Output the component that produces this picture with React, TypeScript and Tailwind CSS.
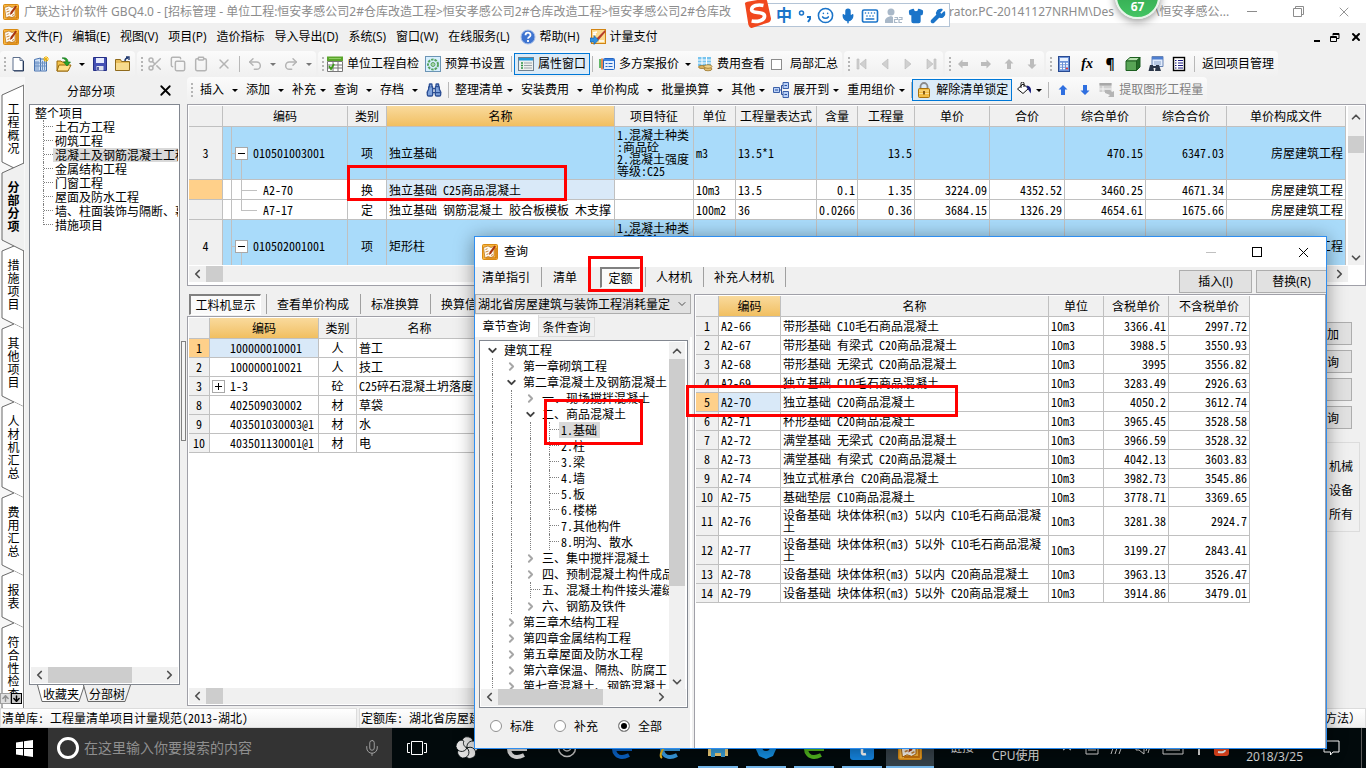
import type { ReactNode } from "react";
import {
  ArrowDown,
  ArrowUp,
  Binoculars,
  ChevronDown,
  ChevronLeft,
  ChevronRight,
  ChevronUp,
  Clipboard,
  Copy,
  Keyboard,
  Mic,
  Redo2,
  Scissors,
  Shirt,
  Smile,
  Undo2,
  Wrench,
  X,
} from "lucide-react";

/* ---------- icons ---------- */

function Svg({ children, className = "size-4" }: { children: ReactNode; className?: string }) {
  return (
    <svg viewBox="0 0 16 16" className={`shrink-0 ${className}`} fill="none" aria-hidden="true">
      {children}
    </svg>
  );
}

function AppIcon({ className = "size-4" }: { className?: string }) {
  return (
    <Svg className={className}>
      <rect x=".5" y=".5" width="15" height="15" rx="1" fill="#f9b53c" stroke="#d98a12" />
      <path d="M1.500 3.500l4.500-1.500 3 1.500 3-1v9.500l-3 1.500-3-1-3 1.500z" fill="#fffaf0" stroke="#a35c0a" strokeWidth=".6" />
      <path d="M3.500 5.500l2-.8M3.500 8l3-1M4.500 10.500l2-.8M9 11.500l2-1" stroke="#c8863a" />
      <path d="M12.500 1.500L7.500 8l-.6 3 2.300-1.500L14 2.500z" fill="#a8340f" />
      <path d="M14 4v10H4" stroke="#c8720a" strokeWidth="1.200" />
    </Svg>
  );
}

const NewIcon = () => (
  <Svg>
    <path d="M3 1.500h7l3 3v10H3z" fill="#fff" stroke="#5d6f8c" />
    <path d="M10 1.500v3h3" stroke="#5d6f8c" />
    <path d="M13.500 5v10H4" stroke="#26395a" />
  </Svg>
);

const BuildingIcon = () => (
  <Svg>
    <path d="M1.500 3.500l6-1.500v13h-6zM7.500 3h6v12h-6z" fill="#cfe0f5" stroke="#4a74b0" />
    <path d="M3 5v9M5 5v9M9.500 5v9M11.500 5v9M2 7h11M2 10h11" stroke="#6f93c6" />
    <path d="M13 0v6M10 3h6M11 1l4 4M15 1l-4 4" stroke="#f3b300" />
  </Svg>
);

const OpenIcon = () => (
  <Svg>
    <path d="M1 5h4l1 1h6v9H1z" fill="#f2c14a" stroke="#9a6b0c" />
    <path d="M3 9h12l-3 6H1z" fill="#ffe08a" stroke="#9a6b0c" />
    <path d="M6 2c4-1 6 1 6 4h2.500L11 10 7.500 6H10c0-2-1-3-4-4z" fill="#27a52c" stroke="#0f6c16" strokeWidth=".6" />
  </Svg>
);

const SaveIcon = () => (
  <Svg>
    <path d="M1.500 1.500h13v13h-13z" fill="#4450b4" stroke="#252f86" />
    <path d="M4 2h8v5H4z" fill="#e8ecff" />
    <path d="M4.500 10h7v4.500h-7z" fill="#dfe3ee" />
    <path d="M6 11v3" stroke="#252f86" strokeWidth="1.500" />
  </Svg>
);

const FolderIcon = () => (
  <Svg>
    <path d="M.5 3.500h5l1 2h8v9H.5z" fill="#e8bd5b" stroke="#8f6a1c" />
    <path d="M1 7h13v7H1z" fill="#f7db8e" />
    <path d="M10 5c0-2 1-3 3-3M11 1l3 0v3" stroke="#20386e" strokeWidth="1.400" />
  </Svg>
);

const CheckSheetIcon = () => (
  <Svg>
    <path d="M.5 5.500h15v10H.5z" fill="#fff" stroke="#777" />
    <path d="M0 .5h16v4.500H0z" fill="#5aa52b" />
    <path d="M2 2.500h12" stroke="#8fce63" />
    <path d="M6 5v10M1 9h14M1 12h14M11 5v10" stroke="#777" />
    <path d="M2 10l2 3 3-5" stroke="#3c9b19" strokeWidth="1.800" />
  </Svg>
);

const GearPageIcon = () => (
  <Svg>
    <rect x=".5" y=".5" width="15" height="15" fill="#d8efff" stroke="#6b95b5" />
    <circle cx="8" cy="8.500" r="5" stroke="#58a45e" strokeWidth="2" strokeDasharray="2.500 1" />
    <circle cx="8" cy="8.500" r="2" fill="#a9d6ad" stroke="#58a45e" />
  </Svg>
);

const PanelIcon = () => (
  <Svg>
    <rect x=".5" y="1.500" width="15" height="13" fill="#eef0ee" stroke="#6f8190" />
    <path d="M1 2h14v2.500H1z" fill="#1c9ae0" />
    <path d="M3 7h2M3 9.500h2M3 12h2" stroke="#2f9146" strokeWidth="1.500" />
    <path d="M6 7h8M6 9.500h8M6 12h8" stroke="#9aa3a8" />
  </Svg>
);

const PlansIcon = () => (
  <Svg>
    <path d="M1 3v9" stroke="#35a33b" strokeWidth="1.500" />
    <path d="M3 2.500v11" stroke="#e0651b" strokeWidth="1.500" />
    <rect x="4.500" y="2.500" width="11" height="11" rx="1" fill="#e6f0ff" stroke="#2466c4" />
    <path d="M5 3h10v2H5z" fill="#3b82e0" />
    <path d="M6.500 7.500h2M6.500 10.500h2M9.500 7.500h4M9.500 10.500h4" stroke="#2466c4" />
  </Svg>
);

const FeeIcon = () => (
  <Svg>
    <path d="M1 1h13v9H1z" fill="#78c4ee" />
    <path d="M1 4h13M1 7h13M5 1v9M9.500 1v9" stroke="#fff" />
    <ellipse cx="5" cy="11" rx="3.500" ry="1.600" fill="#dcb15c" stroke="#8f6a1c" strokeWidth=".7" />
    <ellipse cx="11" cy="13" rx="4" ry="1.800" fill="#e6c173" stroke="#8f6a1c" strokeWidth=".7" />
    <ellipse cx="11" cy="10.500" rx="4" ry="1.800" fill="#f0d28b" stroke="#8f6a1c" strokeWidth=".7" />
  </Svg>
);

const CalcIcon = () => (
  <Svg>
    <rect x="2.500" y=".5" width="11" height="15" fill="#6e93d8" stroke="#284a92" />
    <path d="M4 2h8v3H4z" fill="#e9f2ff" />
    <path d="M4 7.500h8M4 10h8M4 12.500h8" stroke="#fff" strokeWidth="1.500" strokeDasharray="2 1" />
    <path d="M10 12.500h2" stroke="#e33" strokeWidth="1.500" />
  </Svg>
);

const CubeIcon = () => (
  <Svg>
    <path d="M1 5l4-3.500h10L11.500 5z" fill="#b6e0ae" stroke="#1d5f20" />
    <path d="M1 5h10.500v9.500H1z" fill="#58a556" stroke="#1d5f20" />
    <path d="M11.500 5L15 1.500V11l-3.500 3.500z" fill="#256d2a" stroke="#1d5f20" />
  </Svg>
);

const FindSheetIcon = () => (
  <Svg>
    <path d="M4 .5h11v10H4z" fill="#e2ecfb" stroke="#6884b4" />
    <path d="M4 1h11v2.500H4z" fill="#4f7fd0" />
    <path d="M6 6h7M6 8h7" stroke="#8aa2c8" />
    <path d="M2 9h3l1 6H.5zM8 9h3l2 6H7z" fill="#2b3648" />
    <path d="M5 10h3v2H5z" fill="#2b3648" />
  </Svg>
);

const ListIcon = () => (
  <Svg>
    <rect x="2.500" y="1.500" width="11" height="13" fill="#fff" stroke="#000" strokeWidth="1.400" />
    <path d="M4 4.500h1.500M4 7h1.500M4 9.500h1.500M4 12h1.500M7 4.500h5M7 7h5M7 9.500h5M7 12h5" stroke="#1b1b80" />
  </Svg>
);

const ExpandIcon = () => (
  <Svg>
    <path d="M.5 5.500h6v5h-6zM10 .5h5.500v6H10zM10 9.500h5.500v6H10z" fill="#b9d0f7" stroke="#3c61a8" />
    <path d="M6.500 8h2M8.500 3.500v9M8.500 3.500H10M8.500 12.500H10M2 8h3M11.500 3.500h2.500M11.500 12.500h2.500" stroke="#2b4f9c" />
  </Svg>
);

const LockIcon = () => (
  <Svg>
    <path d="M4.500 7V4.500a3.500 3.500 0 017 0V7" stroke="#8b8b8b" strokeWidth="1.800" />
    <rect x="2.500" y="6.500" width="11" height="9" rx="1" fill="#f2bd45" stroke="#a8720d" />
    <path d="M3 9h10M3 11.500h10" stroke="#fbe09a" />
    <path d="M8 9v3.500" stroke="#6a4100" strokeWidth="1.600" />
  </Svg>
);

const BucketIcon = () => (
  <Svg>
    <path d="M1.500 7l5.500-5 5.500 4.500-5.500 5z" fill="#fff" stroke="#111" />
    <path d="M8 5V1.500a1.500 1.500 0 00-3 0V6" stroke="#111" />
    <path d="M10.500 3.500c4 0 5.500 4 4 8-1-2.500-2-3.500-3-4.500z" fill="#1a1f7c" />
  </Svg>
);

const ExtractIcon = () => (
  <Svg>
    <path d="M.5 1h12v9H.5z" fill="#d0d0d0" />
    <path d="M.5 1h12v2.500H.5z" fill="#a8a8a8" />
    <path d="M4 4v9M.5 7h12" stroke="#f4f4f4" />
    <path d="M6 8h5l2 2 2-1v6H9l2-2-5-2z" fill="#b4b4b4" />
  </Svg>
);

const HelpIcon = () => (
  <Svg>
    <circle cx="8" cy="8" r="7" fill="#3e74d0" stroke="#a9bfe8" />
    <path d="M5.500 6.200a2.500 2.500 0 115 0c0 1.800-2.500 1.800-2.500 3.600M8 11v2" stroke="#fff" strokeWidth="1.800" />
  </Svg>
);

const PayIcon = () => (
  <Svg>
    <rect x="1.500" y=".5" width="14" height="14" fill="#fbd98c" stroke="#d28413" />
    <path d="M3 4l4-1M3 6l3-1M9 12h5" stroke="#fff" strokeWidth="1.500" />
    <path d="M15 1L7 9l-1 3 3-1.500L15.500 3z" fill="#b43d2a" />
    <path d="M0 9h4V6.500L8.500 11 4 15.500V13H0z" fill="#2f8fe0" stroke="#175c9c" strokeWidth=".6" />
  </Svg>
);

const MdiRestore = () => (
  <svg width="10" height="9" fill="none" stroke="#000" aria-hidden="true">
    <path d="M3 2.500V.5h6v5H7M3 1.500h6M.5 3.500h6v5h-6zM.5 4.500h6" />
  </svg>
);

function BlockArrow({ dir, color }: { dir: "left" | "right" | "up" | "down"; color: string }) {
  const turn = { up: 0, right: 90, down: 180, left: 270 }[dir];
  return (
    <Svg>
      <path d="M8 3l4.500 4.500h-2.500V13H6V7.500H3.500z" fill={color} transform={`rotate(${turn} 8 8)`} />
    </Svg>
  );
}

/* ---------- small parts ---------- */

const Grip = () => (
  <svg width="3" height="16" className="-mr-1 shrink-0" aria-hidden="true">
    {[1, 5, 9, 13].map((y) => (
      <rect key={y} x="0" y={y} width="2" height="2" fill="#b5b5b5" />
    ))}
  </svg>
);

const Sep = () => <span className="h-4 w-px shrink-0 bg-[#b8b8b8]" />;

const Caret = ({ dim = false }: { dim?: boolean }) => (
  <svg width="6" height="3" viewBox="0 0 6 3" className="shrink-0" aria-hidden="true">
    <path d="M0 0h6L3 3z" fill={dim ? "#777" : "#000"} />
  </svg>
);

function Group({ children, className = "gap-[7px]" }: { children: ReactNode; className?: string }) {
  return (
    <div className={`flex h-[26px] shrink-0 items-center rounded bg-linear-to-b from-[#fbfbfb] to-[#f0f0f0] px-1 ${className}`}>
      {children}
    </div>
  );
}

function Tool({ icon, label, pressed = false, dim = false }: { icon?: ReactNode; label?: string; pressed?: boolean; dim?: boolean }) {
  return (
    <button
      type="button"
      aria-label={label ?? "工具"}
      className={`flex shrink-0 items-center gap-1 whitespace-nowrap ${pressed ? "-mx-1 h-[22px] border border-[#0078d7] bg-[#dcebf7] px-[3px]" : ""} ${dim ? "text-[#808080]" : ""}`}
    >
      {icon}
      {label && <span>{label}</span>}
    </button>
  );
}

function DropTool({ label, icon, tight = false }: { label: string; icon?: ReactNode; tight?: boolean }) {
  return (
    <button type="button" className={`flex shrink-0 items-center whitespace-nowrap ${tight ? "gap-1" : "gap-2"}`}>
      <span className="flex items-center gap-1">
        {icon}
        {label}
      </span>
      <Caret />
    </button>
  );
}

function HScroll({ thumb }: { thumb: string }) {
  return (
    <div className="flex h-4 shrink-0 items-center bg-[#f0f0f0] text-[#505050]">
      <ChevronLeft className="w-[17px] shrink-0" size={14} strokeWidth={3} />
      <span className={`h-full shrink-0 bg-[#cdcdcd] ${thumb}`} />
      <ChevronRight className="ml-auto w-[17px]" size={14} strokeWidth={3} />
    </div>
  );
}

const headCell = "border-r border-b border-[#c0c0c0] bg-[#f0f0f0] p-0 font-normal";
const hotCell = "border-r border-b border-[#c0c0c0] bg-linear-to-b from-[#f9da9c] to-[#f1bf60] p-0 font-normal";
const cell = "border-r border-b border-[#c0c0c0] px-0.5 py-0";

const Box = ({ sign }: { sign: "+" | "-" }) => (
  <svg width="13" height="13" className="shrink-0" aria-hidden="true">
    <rect x=".5" y=".5" width="12" height="12" fill="#fff" stroke="#a8a8a8" />
    <path d={sign === "+" ? "M3 6.500h7M6.500 3v7" : "M3 6.500h7"} stroke="#000" />
  </svg>
);

/* ---------- side tabs ---------- */

const sideTabs = ["工程概况", "分部分项", "措施项目", "其他项目", "人材机汇总", "费用汇总", "报表", "符合性检查"];

function SideTab({ label, active, first }: { label: string; active: boolean; first: boolean }) {
  const h = label.length * 13 + 26;
  const top = active || first ? "L24 -4" : "L14 1";
  return (
    <button type="button" className={`relative block w-[25px] shrink-0 py-[13px] ${active ? "z-10 font-bold" : ""}`}>
      <svg width="25" height={h} className="absolute top-0 left-0 overflow-visible" fill="none" aria-hidden="true">
        <path
          d={`M2 6${top}${active || first ? "" : "L24 6"}V${h + 6}L14 ${h + 1}L2 ${h - 5}Z`}
          fill={active ? "#f0f0f0" : "#fff"}
        />
        <path d={`M24 ${h + 6}L2 ${h - 5}V6${top}`} stroke="#696969" />
        {!active && <path d={`M23.500 -4V${h + 6}`} stroke="#808080" />}
      </svg>
      <span className="relative ml-0.5 block">
        {[...label].map((ch, i) => (
          <span key={i} className="block leading-[13px]">
            {ch}
          </span>
        ))}
      </span>
    </button>
  );
}

const projectTree = [
  "土石方工程",
  "砌筑工程",
  "混凝土及钢筋混凝土工程",
  "金属结构工程",
  "门窗工程",
  "屋面及防水工程",
  "墙、柱面装饰与隔断、幕墙",
  "措施项目",
];

function ProjectPanel() {
  return (
    <section className="ml-1 flex w-[151px] shrink-0 flex-col">
      <header className="flex h-[27px] shrink-0 items-center">
        <h2 className="flex-1 pl-5 text-center">分部分项</h2>
        <button type="button" aria-label="关闭" className="mr-1.5 ml-6">
          <X size={17} strokeWidth={2.5} />
        </button>
      </header>
      <div className="flex min-h-0 flex-1 flex-col border border-[#828790] bg-white p-px">
        <ul className="min-h-0 flex-1 overflow-hidden whitespace-nowrap leading-[14px]">
          <li className="pl-1">整个项目</li>
          {projectTree.map((name, i) => (
            <li key={name} className="flex h-3.5 pl-3">
              <span className={`w-2.5 shrink-0 border-l border-dotted border-[#808080] ${i === projectTree.length - 1 ? "h-[7px]" : "h-3.5"}`}>
                <span className="block h-[7px] border-b border-dotted border-[#808080]" />
              </span>
              <span className={`pl-0.5 ${i === 2 ? "bg-[#d9d9d9]" : ""}`}>{name}</span>
            </li>
          ))}
        </ul>
        <HScroll thumb="w-[84px]" />
      </div>
      <div className="flex h-[23px] shrink-0 items-start pl-2">
        {["收藏夹", "分部树"].map((name, i) => (
          <button key={name} type="button" className="relative -mr-0.5 h-[18px] w-12 leading-[18px]">
            <svg viewBox="0 0 48 18" className="absolute inset-0" fill="none" aria-hidden="true">
              <path d="M.5 0L5 16.500H42L47.500 0" fill={i === 0 ? "#fff" : "#f0f0f0"} stroke="#696969" />
            </svg>
            <span className="relative">{name}</span>
          </button>
        ))}
      </div>
    </section>
  );
}

/* ---------- bill table ---------- */

const billHead = ["编码", "类别", "名称", "项目特征", "单位", "工程量表达式", "含量", "工程量", "单价", "合价", "综合单价", "综合合价", "单价构成文件"];

interface Bill {
  no: string;
  kind: "item" | "sub" | "last";
  cells: string[];
}

const bills: Bill[] = [
  { no: "3", kind: "item", cells: ["010501003001", "项", "独立基础", "1.混凝土种类\n:商品砼\n2.混凝土强度\n等级:C25", "m3", "13.5*1", "", "13.5", "", "", "470.15", "6347.03", "房屋建筑工程"] },
  { no: "", kind: "sub", cells: ["A2-70", "换", "独立基础 C25商品混凝土", "", "10m3", "13.5", "0.1", "1.35", "3224.09", "4352.52", "3460.25", "4671.34", "房屋建筑工程"] },
  { no: "", kind: "last", cells: ["A7-17", "定", "独立基础 钢筋混凝土 胶合板模板 木支撑", "", "100m2", "36", "0.0266", "0.36", "3684.15", "1326.29", "4654.61", "1675.66", "房屋建筑工程"] },
  { no: "4", kind: "item", cells: ["010502001001", "项", "矩形柱", "1.混凝土种类\n:商品砼\n2.混凝土强度\n等级:C25", "m3", "", "", "", "", "", "", "", "房屋建筑工程"] },
];

function CodeCell({ kind, code }: { kind: Bill["kind"]; code: string }) {
  return (
    <td className="relative border-r border-b border-[#c0c0c0] p-0">
      <span className="absolute inset-y-0 left-2 w-px bg-[#c0c0c0]" />
      {kind === "item" ? (
        <>
          <span className="absolute top-1/2 bottom-0 left-[18px] w-px bg-[#c0c0c0]" />
          <span className="absolute top-1/2 left-2 h-px w-2 bg-[#c0c0c0]" />
          <span className="relative flex items-center gap-[5px] pl-3">
            <Box sign="-" />
            {code}
          </span>
        </>
      ) : (
        <>
          <span className={`absolute top-0 left-[18px] w-px bg-[#c0c0c0] ${kind === "last" ? "bottom-1/2" : "bottom-0"}`} />
          <span className="absolute top-1/2 left-[18px] h-px w-4 bg-[#c0c0c0]" />
          <span className="pl-10">{code}</span>
        </>
      )}
    </td>
  );
}

function BillGrid() {
  return (
    <div className="flex h-[182px] shrink-0 flex-col border border-[#a0a0a8] bg-white p-px">
      <div className="flex min-h-0 flex-1">
        <div className="min-w-0 flex-1 overflow-hidden">
          <table className="w-full table-fixed border-separate border-spacing-0 leading-3 whitespace-pre">
            <colgroup>
              <col className="w-[34px]" />
              <col className="w-[125px]" />
              <col className="w-[39px]" />
              <col className="w-[228px]" />
              <col className="w-[79px]" />
              <col className="w-[42px]" />
              <col className="w-[81px]" />
              <col className="w-[41px]" />
              <col className="w-[57px]" />
              <col className="w-[75px]" />
              <col className="w-[75px]" />
              <col className="w-[81px]" />
              <col className="w-[81px]" />
              <col />
            </colgroup>
            <thead>
              <tr className="h-[21px]">
                <th className={headCell} />
                {billHead.map((h) => (
                  <th key={h} className={h === "名称" ? hotCell : headCell}>
                    {h}
                  </th>
                ))}
              </tr>
            </thead>
            <tbody>
              {bills.map(({ no, kind, cells }) => (
                <tr key={cells[0]} className={kind === "item" ? "h-[53px] bg-[#a9dbfa]" : "h-5 bg-white"}>
                  <th className={`border-r border-b border-[#c0c0c0] p-0 font-normal ${kind === "sub" ? "bg-[#ffd08a]" : "bg-[#f0f0f0]"}`}>{no}</th>
                  <CodeCell kind={kind} code={cells[0]} />
                  {cells.slice(1).map((text, i) => (
                    <td
                      key={i}
                      className={`${cell} ${i === 0 ? "text-center" : i > 4 ? "text-right" : "text-left"} ${i === 1 && kind === "sub" ? "bg-[#d9e9f8]" : ""}`}
                    >
                      {text}
                    </td>
                  ))}
                </tr>
              ))}
            </tbody>
          </table>
        </div>
        <div className="ml-0.5 flex w-4 flex-col items-center bg-[#f0f0f0] text-[#505050]">
          <ChevronUp size={14} strokeWidth={3} className="mt-1" />
          <span className="mt-3 h-[17px] w-full bg-[#cdcdcd]" />
          <ChevronDown size={14} strokeWidth={3} className="mt-auto" />
        </div>
      </div>
      <div className="pt-px pr-4 pb-0.5">
        <HScroll thumb="w-[17px]" />
      </div>
    </div>
  );
}

/* ---------- lower half ---------- */

const resources = [
  ["1", "100000010001", "人", "普工"],
  ["2", "100000010021", "人", "技工"],
  ["3", "1-3", "砼", "C25碎石混凝土坍落度"],
  ["8", "402509030002", "材", "草袋"],
  ["9", "403501030003@1", "材", "水"],
  ["10", "403501130001@1", "材", "电"],
];

const pressedTab = "border-t-2 border-l-2 border-r border-b border-t-[#808080] border-l-[#808080] border-r-white border-b-white bg-[#fafafa]";

function Detail() {
  return (
    <>
      <div className="flex h-[30px] shrink-0 items-center gap-[11px] pt-1.5 pl-0.5 whitespace-nowrap">
        <button type="button" className={`-mr-1.5 h-[21px] w-[72px] ${pressedTab}`}>
          工料机显示
        </button>
        {["查看单价构成", "标准换算", "换算信息"].map((t) => (
          <button key={t} type="button" className="flex items-center gap-2.5">
            <span className="h-5 w-px bg-[#a0a0a0]" />
            {t}
          </button>
        ))}
      </div>
      <div className="flex min-h-0 flex-1 pb-0.5">
        <div className="flex min-w-0 flex-1 flex-col border border-[#a0a0a8] bg-white p-px">
          <div className="min-h-0 flex-1">
            <table className="w-[294px] table-fixed border-separate border-spacing-0 leading-3 whitespace-nowrap">
              <colgroup>
                <col className="w-[21px]" />
                <col className="w-[109px]" />
                <col className="w-[38px]" />
                <col />
              </colgroup>
              <thead>
                <tr className="h-[21px]">
                  <th className={headCell} />
                  <th className={hotCell}>编码</th>
                  <th className={headCell}>类别</th>
                  <th className={headCell}>名称</th>
                </tr>
              </thead>
              <tbody>
                {resources.map(([no, code, kind, name], i) => (
                  <tr key={no} className="h-[19px]">
                    <th className={`border-r border-b border-[#c0c0c0] p-0 font-normal ${i === 0 ? "bg-[#ffd08a]" : "bg-[#f0f0f0]"}`}>{no}</th>
                    <td className={`${cell} ${i === 0 ? "bg-[#d9e9f8]" : ""}`}>
                      <span className="flex items-center gap-[5px]">
                        {no === "3" ? <Box sign="+" /> : <span className="w-[13px] shrink-0" />}
                        {code}
                      </span>
                    </td>
                    <td className={`${cell} text-center`}>{kind}</td>
                    <td className={cell}>{name}</td>
                  </tr>
                ))}
              </tbody>
            </table>
          </div>
          <HScroll thumb="w-[17px]" />
        </div>
        <div className="flex w-[110px] flex-col gap-[5px] pt-1.5 pr-3.5 pl-2">
          {["添加", "查询", "", "查询"].map((t, i) => (
            <button key={i} type="button" aria-label={t || "明细"} className="h-[23px] border border-[#adadad] bg-[#e1e1e1] pr-3 text-right">
              {t}
            </button>
          ))}
          <div className="mt-2 -mr-2 flex h-[90px] flex-col items-end gap-3 border border-[#dcdcdc] pt-[17px] pr-1.5 leading-3">
            <span>机械</span>
            <span>设备</span>
            <span>所有</span>
          </div>
        </div>
      </div>
    </>
  );
}

/* ---------- query dialog ---------- */

interface Node {
  level: number;
  text: string;
  state: "open" | "closed" | "leaf";
}

const chapters: Node[] = [
  { level: 0, text: "建筑工程", state: "open" },
  { level: 1, text: "第一章砌筑工程", state: "closed" },
  { level: 1, text: "第二章混凝土及钢筋混凝土", state: "open" },
  { level: 2, text: "一、现场搅拌混凝土", state: "closed" },
  { level: 2, text: "二、商品混凝土", state: "open" },
  { level: 3, text: "1.基础", state: "leaf" },
  { level: 3, text: "2.柱", state: "leaf" },
  { level: 3, text: "3.梁", state: "leaf" },
  { level: 3, text: "4.墙", state: "leaf" },
  { level: 3, text: "5.板", state: "leaf" },
  { level: 3, text: "6.楼梯", state: "leaf" },
  { level: 3, text: "7.其他构件", state: "leaf" },
  { level: 3, text: "8.明沟、散水", state: "leaf" },
  { level: 2, text: "三、集中搅拌混凝土", state: "closed" },
  { level: 2, text: "四、预制混凝土构件成品", state: "closed" },
  { level: 2, text: "五、混凝土构件接头灌缝", state: "leaf" },
  { level: 2, text: "六、钢筋及铁件", state: "closed" },
  { level: 1, text: "第三章木结构工程", state: "closed" },
  { level: 1, text: "第四章金属结构工程", state: "closed" },
  { level: 1, text: "第五章屋面及防水工程", state: "closed" },
  { level: 1, text: "第六章保温、隔热、防腐工", state: "closed" },
  { level: 1, text: "第七章混凝土、钢筋混凝土", state: "closed" },
];

const quotas = [
  ["A2-66", "带形基础 C10毛石商品混凝土", "3366.41", "2997.72"],
  ["A2-67", "带形基础 有梁式 C20商品混凝土", "3988.5", "3550.93"],
  ["A2-68", "带形基础 无梁式 C20商品混凝土", "3995", "3556.82"],
  ["A2-69", "独立基础 C10毛石商品混凝土", "3283.49", "2926.63"],
  ["A2-70", "独立基础 C20商品混凝土", "4050.2", "3612.74"],
  ["A2-71", "杯形基础 C20商品混凝土", "3965.45", "3528.58"],
  ["A2-72", "满堂基础 无梁式 C20商品混凝土", "3966.59", "3528.32"],
  ["A2-73", "满堂基础 有梁式 C20商品混凝土", "4042.13", "3603.83"],
  ["A2-74", "独立式桩承台 C20商品混凝土", "3982.73", "3545.86"],
  ["A2-75", "基础垫层 C10商品混凝土", "3778.71", "3369.65"],
  ["A2-76", "设备基础 块体体积(m3) 5以内 C10毛石商品混凝\n土", "3281.38", "2924.7"],
  ["A2-77", "设备基础 块体体积(m3) 5以外 C10毛石商品混凝\n土", "3199.27", "2843.41"],
  ["A2-78", "设备基础 块体体积(m3) 5以内 C20商品混凝土", "3963.13", "3526.47"],
  ["A2-79", "设备基础 块体体积(m3) 5以外 C20商品混凝土", "3914.86", "3479.01"],
];

function TreeRow({ level, text, state }: Node) {
  return (
    <li className="flex h-4 items-center whitespace-nowrap">
      {Array.from({ length: level }, (_, k) => (
        <span key={k} className="h-full w-[19px] shrink-0 pl-[9px]">
          <span className="block h-full border-l border-dotted border-[#808080]" />
        </span>
      ))}
      <span className="flex h-full w-[19px] shrink-0 items-center justify-center">
        {state === "open" && <ChevronDown size={13} strokeWidth={3.5} color="#404040" />}
        {state === "closed" && <ChevronRight size={13} strokeWidth={3.5} color="#a6a6a6" />}
        {state === "leaf" && (
          <span className="ml-[9px] h-full flex-1 border-l border-dotted border-[#808080]">
            <span className="block h-2 border-b border-dotted border-[#808080]" />
          </span>
        )}
      </span>
      <span className={`pl-0.5 leading-4 ${text === "1.基础" ? "bg-[#d9d9d9] pr-[3px]" : ""}`}>{text}</span>
    </li>
  );
}

function ChapterPane() {
  return (
    <div className="flex w-[217px] shrink-0 flex-col">
      <label className="relative block h-5">
        <span className="sr-only">定额库</span>
        <select className="h-5 w-[216px] appearance-none border border-[#adadad] bg-[#e1e1e1] pl-0.5 leading-3">
          <option>湖北省房屋建筑与装饰工程消耗量定</option>
        </select>
        <ChevronDown size={12} className="absolute top-1 right-1 text-[#505050]" />
      </label>
      <div className="flex h-[23px] shrink-0 items-end">
        <button type="button" className="h-[22px] w-16 border-r border-[#dcdcdc] bg-white">
          章节查询
        </button>
        <button type="button" className="h-5 w-14 border-t border-r border-b border-[#dcdcdc] leading-3">
          条件查询
        </button>
      </div>
      <div className="ml-1 flex min-h-0 flex-1 flex-col border-r-2 border-white pt-[3px]">
        <div className="mr-0.5 flex min-h-0 flex-1 flex-col border border-[#828790] bg-white p-px">
          <div className="flex min-h-0 flex-1">
            <ul className="min-w-0 flex-1 overflow-hidden pl-0.5">
              {chapters.map((n) => (
                <TreeRow key={n.text} {...n} />
              ))}
            </ul>
            <div className="mr-px flex w-4 flex-col items-center bg-[#f0f0f0] text-[#505050]">
              <ChevronUp size={14} strokeWidth={3} className="mt-0.5" />
              <span className="mt-px mb-auto h-[227px] w-full bg-[#cdcdcd]" />
              <ChevronDown size={14} strokeWidth={3} />
            </div>
          </div>
          <div className="bg-[#f0f0f0] pr-4 pb-px">
            <HScroll thumb="w-[105px]" />
          </div>
        </div>
        <div className="flex h-10 shrink-0 items-center gap-5 pb-1 pl-[11px]">
          {["标准", "补充", "全部"].map((t) => (
            <label key={t} className="flex items-center gap-2">
              <input
                type="radio"
                name="scope"
                defaultChecked={t === "全部"}
                className="size-3 appearance-none rounded-full border border-[#909090] bg-white checked:bg-black checked:shadow-[inset_0_0_0_2px_#fff]"
              />
              {t}
            </label>
          ))}
        </div>
      </div>
    </div>
  );
}

function QueryDialog() {
  return (
    <section
      role="dialog"
      aria-label="查询"
      className="absolute top-[236px] left-[474px] z-20 flex h-[513px] w-[853px] flex-col border border-[#2f8ef0] bg-[#f0f0f0] shadow-[0_2px_18px_rgba(0,0,0,0.4)]"
    >
      <header className="flex h-[30px] shrink-0 items-center bg-white pl-[7px]">
        <AppIcon />
        <h2 className="ml-1.5 font-['Open_Sans','Noto_Sans_CJK_SC',sans-serif]">查询</h2>
        <div className="ml-auto flex items-center">
          <button type="button" aria-label="最小化" className="flex w-[46px] justify-center">
            <span className="h-px w-2.5 bg-[#c0c0c0]" />
          </button>
          <button type="button" aria-label="最大化" className="flex w-[46px] justify-center">
            <span className="size-2.5 border border-black" />
          </button>
          <button type="button" aria-label="关闭" className="flex w-[46px] justify-center">
            <X size={17} strokeWidth={1.4} />
          </button>
        </div>
      </header>
      <div className="flex h-[27px] shrink-0 items-start whitespace-nowrap">
        <div className="flex h-5 items-center gap-[11px] pl-[7px]">
          <button type="button">清单指引</button>
          <span className="h-5 w-px bg-[#a0a0a0]" />
          <button type="button">清单</button>
          <span className="ml-0.5 h-5 w-px bg-[#a0a0a0]" />
          <button type="button" className={`-mr-1.5 -ml-0.5 h-[21px] w-10 ${pressedTab}`}>
            定额
          </button>
          <span className="h-5 w-px bg-[#a0a0a0]" />
          <button type="button" className="-ml-px">
            人材机
          </button>
          <span className="h-5 w-px bg-[#a0a0a0]" />
          <button type="button" className="-ml-px">
            补充人材机
          </button>
          <span className="h-5 w-px bg-[#a0a0a0]" />
        </div>
        <div className="ml-auto flex gap-1 pt-[3px] font-['Open_Sans','Noto_Sans_CJK_SC',sans-serif]">
          <button type="button" className="h-[23px] w-[73px] border border-[#adadad] bg-[#e1e1e1]">
            插入(I)
          </button>
          <button type="button" className="h-[23px] w-[70px] border border-r-0 border-[#adadad] bg-[#e1e1e1]">
            替换(R)
          </button>
        </div>
      </div>
      <div className="flex min-h-0 flex-1">
        <ChapterPane />
        <div className="ml-0.5 min-w-0 flex-1 border border-b-0 border-[#a0a0a8] bg-white p-px">
          <table className="w-[554px] table-fixed border-separate border-spacing-0 leading-3 whitespace-pre">
            <colgroup>
              <col className="w-[23px]" />
              <col className="w-[62px]" />
              <col className="w-[268px]" />
              <col className="w-[55px]" />
              <col className="w-[65px]" />
              <col className="w-[81px]" />
            </colgroup>
            <thead>
              <tr className="h-[21px]">
                <th className={headCell} />
                {["编码", "名称", "单位", "含税单价", "不含税单价"].map((h) => (
                  <th key={h} className={h === "编码" ? hotCell : headCell}>
                    {h}
                  </th>
                ))}
              </tr>
            </thead>
            <tbody>
              {quotas.map(([code, name, taxed, untaxed], i) => (
                <tr key={code} className={name.includes("\n") ? "h-[29px]" : "h-[19px]"}>
                  <th className={`border-r border-b border-[#c0c0c0] p-0 font-normal ${i === 4 ? "bg-[#ffd08a]" : "bg-[#f0f0f0]"}`}>{i + 1}</th>
                  <td className={`${cell} ${i === 4 ? "bg-[#d9e9f8]" : ""}`}>{code}</td>
                  <td className={cell}>{name}</td>
                  <td className={cell}>10m3</td>
                  <td className={`${cell} text-right`}>{taxed}</td>
                  <td className={`${cell} text-right`}>{untaxed}</td>
                </tr>
              ))}
            </tbody>
          </table>
        </div>
      </div>
      <span className="absolute top-[19px] left-[113px] h-9 w-[55px] border-3 border-[#ff0000]" />
      <span className="absolute top-[162px] left-[69px] h-[46px] w-[99px] border-3 border-[#ff0000]" />
      <span className="absolute top-[148px] left-[211px] h-8 w-[272px] border-3 border-[#ff0000]" />
    </section>
  );
}

/* ---------- top bars ---------- */

function TitleBar() {
  return (
    <header className="flex h-[23px] shrink-0 items-center overflow-hidden bg-white pl-[3px] font-['Noto_Sans','Noto_Sans_CJK_SC',sans-serif] whitespace-nowrap text-[#8c8c8c]">
      <AppIcon />
      <h1 className="ml-[5px] w-[724px] shrink-0">
        广联达计价软件 GBQ4.0 - [招标管理 - 单位工程:恒安孝感公司2#仓库改造工程&gt;恒安孝感公司2#仓库改造工程&gt;恒安孝感公司2#仓库改
      </h1>
      <span className="ml-[201px] w-[206px] shrink-0">rator.PC-20141127NRHM\Des</span>
      <span>\恒安孝感公...</span>
      <div className="ml-auto flex items-center text-[#8c8c8c]">
        <button type="button" aria-label="最小化" className="flex w-[46px] justify-center">
          <span className="h-px w-2.5 bg-[#8c8c8c]" />
        </button>
        <button type="button" aria-label="还原" className="flex w-[46px] justify-center">
          <svg width="11" height="11" fill="none" stroke="#8c8c8c" aria-hidden="true">
            <path d="M.5 2.500h8v8h-8zM2.500 2.500v-2h8v8h-2" />
          </svg>
        </button>
        <button type="button" aria-label="关闭" className="mr-0.5 flex w-[46px] justify-center">
          <X size={16} strokeWidth={1.4} />
        </button>
      </div>
    </header>
  );
}

function MenuBar() {
  return (
    <nav className="flex h-7 shrink-0 items-center gap-2.5 pl-[3px] whitespace-nowrap">
      <AppIcon className="-mr-1 size-4" />
      {["文件(F)", "编辑(E)", "视图(V)", "项目(P)", "造价指标", "导入导出(D)", "系统(S)", "窗口(W)", "在线服务(L)"].map((m) => (
        <button key={m} type="button">
          {m}
        </button>
      ))}
      <button type="button" className="flex items-center gap-1">
        <HelpIcon />
        帮助(H)
      </button>
      <button type="button" className="flex items-center gap-1">
        <PayIcon />
        计量支付
      </button>
      <div className="ml-auto flex items-center gap-2.5 pr-1">
        <button type="button" aria-label="最小化窗口" className="pt-2">
          <span className="block h-0.5 w-1.5 bg-black" />
        </button>
        <button type="button" aria-label="还原窗口">
          <MdiRestore />
        </button>
        <button type="button" aria-label="关闭窗口">
          <X size={12} strokeWidth={4} />
        </button>
      </div>
    </nav>
  );
}

const dimIcon = { size: 16, color: "#b4b4b4", strokeWidth: 2.2 };

const NavArrow = ({ d }: { d: string }) => (
  <Svg>
    <path d={d} fill="#d0d0d0" stroke="#b8b8b8" strokeWidth=".6" />
  </Svg>
);

function MainToolbar() {
  return (
    <div className="flex h-[26px] shrink-0 gap-0.5">
      <Group>
        <Grip />
        <Tool icon={<NewIcon />} />
        <Tool icon={<BuildingIcon />} />
        <Tool icon={<OpenIcon />} />
        <Caret />
        <Tool icon={<SaveIcon />} />
        <Tool icon={<FolderIcon />} />
      </Group>
      <Group>
        <Grip />
        <Tool icon={<Scissors {...dimIcon} />} />
        <Tool icon={<Copy {...dimIcon} />} />
        <Tool icon={<Clipboard {...dimIcon} />} />
        <Tool icon={<X {...dimIcon} />} />
        <Sep />
        <Tool icon={<Undo2 {...dimIcon} />} />
        <Caret dim />
        <Tool icon={<Redo2 {...dimIcon} />} />
        <Caret dim />
      </Group>
      <Group className="gap-1.5">
        <Grip />
        <Tool icon={<CheckSheetIcon />} label="单位工程自检" />
        <Tool icon={<GearPageIcon />} label="预算书设置" />
        <Sep />
        <Tool icon={<PanelIcon />} label="属性窗口" pressed />
        <Sep />
        <Tool icon={<PlansIcon />} label="多方案报价" />
        <Caret />
        <Tool icon={<FeeIcon />} label="费用查看" />
        <label className="flex items-center gap-2 whitespace-nowrap">
          <input type="checkbox" className="size-[11px] appearance-none border border-[#8c8c8c] bg-white" />
          局部汇总
        </label>
      </Group>
      <Group>
        <Grip />
        <Tool icon={<NavArrow d="M3 3h2v10H3zM12 3v10L6 8z" />} />
        <Tool icon={<NavArrow d="M11 3v10L5 8z" />} />
        <Tool icon={<NavArrow d="M5 3v10l6-5z" />} />
        <Tool icon={<NavArrow d="M11 3h2v10h-2zM4 3v10l6-5z" />} />
      </Group>
      <Group>
        <Grip />
        <Tool icon={<BlockArrow dir="left" color="#bcbcbc" />} />
        <Tool icon={<BlockArrow dir="right" color="#bcbcbc" />} />
        <Tool icon={<BlockArrow dir="up" color="#bcbcbc" />} />
        <Tool icon={<BlockArrow dir="down" color="#bcbcbc" />} />
      </Group>
      <Group>
        <Grip />
        <Tool icon={<CalcIcon />} />
        <button type="button" className="w-4 font-['Liberation_Serif',serif] text-sm font-bold italic">
          fx
        </button>
        <button type="button" className="w-4 text-sm font-bold">
          ¶
        </button>
        <Tool icon={<CubeIcon />} />
        <Tool icon={<FindSheetIcon />} />
        <Tool icon={<ListIcon />} />
        <Sep />
        <Tool label="返回项目管理" />
      </Group>
    </div>
  );
}

function EditToolbar() {
  return (
    <div className="flex h-[27px] shrink-0">
      <Group className="gap-1.5">
        <Grip />
        <div className="ml-1 flex items-center gap-2">
          <DropTool label="插入" />
          <DropTool label="添加" />
          <DropTool label="补充" tight />
          <DropTool label="查询" />
          <DropTool label="存档" />
          <Tool icon={<Binoculars size={16} color="#2c4f94" fill="#7fa3dc" />} />
        </div>
        <Sep />
        <div className="flex items-center gap-2">
          <DropTool label="整理清单" tight />
          <DropTool label="安装费用" />
          <DropTool label="单价构成" />
          <DropTool label="批量换算" />
          <DropTool label="其他" tight />
          <DropTool icon={<ExpandIcon />} label="展开到" tight />
          <DropTool label="重用组价" tight />
        </div>
        <div className="flex items-center gap-1">
          <Sep />
          <Tool icon={<LockIcon />} label="解除清单锁定" pressed />
          <span />
          <Tool icon={<BucketIcon />} />
          <Caret />
        </div>
        <Sep />
        <div className="flex items-center gap-1.5">
          <Tool icon={<BlockArrow dir="up" color="#2f6fe0" />} />
          <Tool icon={<BlockArrow dir="down" color="#2f6fe0" />} />
          <Tool icon={<ExtractIcon />} label="提取图形工程量" dim />
        </div>
      </Group>
    </div>
  );
}

/* ---------- floating widgets ---------- */

function InputBar() {
  return (
    <div className="absolute top-0 left-[743px] z-30 flex h-[27px] w-[207px] items-center text-[#1b74c9]">
      <div className="absolute top-[3px] right-0 bottom-0 left-3 border border-[#b4c4d6] bg-white" />
      <svg viewBox="0 0 26 27" className="relative w-7 shrink-0" fill="none" aria-hidden="true">
        <path d="M2 5Q1 3 4 2.500L19 0q3 0 3.500 2L26 18q0 3-3 4L8 27q-2 0-3-3z" fill="#f1481e" />
        <path d="M19 6c-5-1-11 0-11 4 0 4 12 1 12 6 0 4-7 5.500-12 4.500" stroke="#fff" strokeWidth="3.400" />
      </svg>
      <div className="relative ml-1 flex flex-1 items-center justify-between pt-1 pr-1 pl-px">
        <span className="pb-1 text-base leading-4 font-bold">中</span>
        <svg width="14" height="14" fill="none" aria-hidden="true">
          <circle cx="3.500" cy="4" r="2" stroke="currentColor" strokeWidth="1.500" />
          <path d="M9 8h3v2l-2 3" stroke="currentColor" strokeWidth="2" />
        </svg>
        <Smile size={17} strokeWidth={2.2} />
        <Mic size={16} strokeWidth={2.2} fill="currentColor" />
        <Keyboard size={18} strokeWidth={2.2} />
        <svg viewBox="0 0 18 16" width="18" height="16" fill="#a9b8c8" aria-hidden="true">
          <circle cx="6" cy="4" r="3.500" />
          <path d="M0 15V12q1-3 6-4l2 1v6z" />
          <path d="M9.500 9.500h3v2h-3v3h3M14 9.500h3v2h-3v3h3" fill="none" stroke="#a9b8c8" strokeWidth="1.200" />
        </svg>
        <Shirt size={16} fill="currentColor" />
        <Wrench size={16} fill="currentColor" />
      </div>
    </div>
  );
}

const SpeedBall = () => (
  <div className="absolute -top-[26px] left-[1115px] z-30 flex size-[45px] items-end justify-center rounded-full border-2 border-[#e8f4ea] bg-linear-to-b from-[#2a9a46] to-[#43c463] font-['Open_Sans',sans-serif] text-xs leading-5 font-bold text-white shadow-[0_2px_8px_rgba(0,0,0,0.45)]">
    67
  </div>
);

/* ---------- taskbar ---------- */

const Swirl = () => (
  <svg viewBox="0 0 24 24" className="size-6" fill="#e4e4e4" aria-hidden="true">
    {[0, 72, 144, 216, 288].map((r) => (
      <path key={r} d="M12 12C6 11 5 4 10 1c5-1 9 2 7.500 6-2-.5-5 1-5.500 5z" transform={`rotate(${r} 12 12)`} stroke="#020a0c" strokeWidth=".8" />
    ))}
  </svg>
);

const Edge = ({ color, ring = false }: { color: string; ring?: boolean }) => (
  <svg viewBox="0 0 24 24" className="size-6" fill="none" aria-hidden="true">
    <path d="M5 13h15c0-5-3-8-8-8s-8 4-8 8 3 8 8 8c3 0 5-1 7-2" stroke={color} strokeWidth="4" />
    {ring && <path d="M4 22C-1 19 9 3 22 3" stroke="#f0c020" strokeWidth="2" />}
  </svg>
);

const apps = [
  { name: "浏览器", icon: <Edge color="#0a63c9" />, bar: "" },
  { name: "网页", icon: <Edge color="#39a0e8" ring />, bar: "" },
  {
    name: "资源管理器",
    icon: (
      <svg viewBox="0 0 24 24" className="size-6" aria-hidden="true">
        <path d="M2 4h8l2 3h10v13H2z" fill="#f4d27a" />
        <path d="M5 12h14v9h-4v-4H9v4H5z" fill="#3aa2dc" />
      </svg>
    ),
    bar: "bg-[#76b9ed]",
  },
  {
    name: "云盘",
    icon: (
      <svg viewBox="0 0 24 24" className="size-6" aria-hidden="true">
        <path d="M1 11l11-8 11 8-4 9-7 3-7-3z" fill="#1592e6" />
        <circle cx="12" cy="11" r="4" fill="#02121c" />
      </svg>
    ),
    bar: "bg-[#76b9ed]",
  },
  { name: "安全浏览器", icon: <Edge color="#52b81f" />, bar: "bg-[#76b9ed]" },
  {
    name: "广材助手",
    icon: (
      <svg viewBox="0 0 24 24" className="size-6" fill="none" aria-hidden="true">
        <rect width="24" height="24" rx="3" fill="#1585e0" />
        <path d="M5 10h14M12 6v11q0 2 4 1" stroke="#fff" strokeWidth="2.500" />
      </svg>
    ),
    bar: "bg-[#76b9ed]",
  },
];

function Taskbar() {
  return (
    <footer className="flex h-10 shrink-0 overflow-hidden bg-[#020a0c] font-['Open_Sans','Noto_Sans_CJK_SC',sans-serif] text-[#e6e6e6]">
      <button type="button" aria-label="开始" className="flex w-12 shrink-0 items-center justify-center bg-black">
        <svg width="17" height="17" fill="#fff" aria-hidden="true">
          <path d="M0 2.500l7-1V8H0zM8 1.300L17 0v8H8zM0 9h7v6.500l-7-1zM8 9h9v8l-9-1.300z" />
        </svg>
      </button>
      <label className="flex w-[344px] shrink-0 items-center bg-[#333] pl-[9px]">
        <span className="size-[22px] shrink-0 rounded-full border-3 border-white" />
        <input
          aria-label="搜索"
          placeholder="在这里输入你要搜索的内容"
          className="ml-[5px] min-w-0 flex-1 bg-transparent text-sm placeholder:text-[#8f8f8f]"
        />
        <Mic size={18} strokeWidth={1.3} color="#a0a0a0" className="mr-[11px]" />
      </label>
      <button type="button" aria-label="任务视图" className="flex w-[50px] shrink-0 items-center justify-center">
        <svg width="20" height="14" fill="none" stroke="#fff" aria-hidden="true">
          <path d="M4.500.5h11v13h-11zM3 2.500H.5v9H3M17 2.500h2.500v9H17" />
        </svg>
      </button>
      <button type="button" aria-label="风扇" className="flex w-[50px] shrink-0 items-center justify-center">
        <Swirl />
      </button>
      <button type="button" aria-label="Edge" className="flex w-[50px] shrink-0 items-center justify-center">
        <Edge color="#e4e4e4" />
      </button>
      <button type="button" aria-label="音乐" className="flex w-[50px] shrink-0 items-center justify-center">
        <svg viewBox="0 0 20 20" className="size-5" fill="none" stroke="#c8c8c8" strokeWidth="1.500" aria-hidden="true">
          <circle cx="10" cy="10" r="8.500" />
          <circle cx="10" cy="9" r="4" />
        </svg>
      </button>
      <div className="ml-1.5 flex shrink-0">
        {apps.map(({ name, icon, bar }) => (
          <button key={name} type="button" aria-label={name} className="flex w-12 flex-col items-center pt-2">
            {icon}
            <span className={`mt-auto h-0.5 w-10 shrink-0 ${bar}`} />
          </button>
        ))}
        <button type="button" aria-label="广联达" className="flex w-12 flex-col items-center bg-[#36424a] pt-2">
          <AppIcon className="size-6" />
          <span className="mt-auto h-0.5 w-full bg-[#76b9ed]" />
        </button>
      </div>
      <span className="mt-3 ml-4 text-xs leading-4">链接</span>
      <span className="mt-5 ml-[18px] text-xs leading-4">CPU使用</span>
      <div className="ml-5 flex flex-1 items-center justify-between">
        <ChevronUp size={14} />
        <svg width="14" height="14" fill="none" stroke="#ddd" aria-hidden="true">
          <path d="M1 1h12v12H1zM3 5h8M3 9h8" />
        </svg>
        <svg width="14" height="14" fill="none" stroke="#ddd" aria-hidden="true">
          <path d="M1 13l4-12M5 13l4-12M9 13l3-8" />
        </svg>
        <svg width="16" height="14" fill="none" stroke="#ddd" aria-hidden="true">
          <path d="M1 5h3l5-4v12l-5-4H1zM11 4q2 3 0 6M13 2q3 5 0 10" />
        </svg>
        <svg width="22" height="14" fill="none" stroke="#ddd" aria-hidden="true">
          <path d="M1 1h20v12H1zM4 5h14M4 9h14" />
        </svg>
        <svg width="8" height="14" fill="none" stroke="#ddd" strokeWidth="2" aria-hidden="true">
          <path d="M4 0v14" />
        </svg>
        <svg width="16" height="16" fill="none" aria-hidden="true">
          <rect width="15" height="16" rx="3" fill="#f1481e" />
          <path d="M4 12q7 1 7-2" stroke="#fff" strokeWidth="2" />
        </svg>
      </div>
      <span className="mt-[21px] ml-4 text-xs leading-4">2018/3/25</span>
      <button type="button" aria-label="通知" className="ml-3 flex w-8 items-center justify-center">
        <svg width="17" height="16" fill="none" stroke="#fff" aria-hidden="true">
          <path d="M1 1h15v11h-6l-2.500 3V12H1z" />
        </svg>
      </button>
      <span className="mr-1 ml-3.5 h-full w-px bg-[#5a5a5a]" />
    </footer>
  );
}

export default function App() {
  return (
    <div className="relative flex h-screen w-full flex-col overflow-hidden bg-[#f0f0f0] font-['Noto_Sans_Mono_CJK_SC','Noto_Sans_CJK_SC',sans-serif] text-xs text-black">
      <div className="flex flex-col font-['Open_Sans','Noto_Sans_CJK_SC',sans-serif]">
        <TitleBar />
        <MenuBar />
        <MainToolbar />
      </div>
      <main className="flex min-h-0 flex-1">
        <div className="relative flex w-[25px] shrink-0 flex-col overflow-hidden bg-[#f7f7f7] pt-3">
          {sideTabs.map((t, i) => (
            <SideTab key={t} label={t} active={i === 1} first={i === 0} />
          ))}
          <div className="absolute bottom-1 left-0 z-20 flex">
            <button type="button" aria-label="上移" className="border border-[#a0a0a0] bg-[#e0e0e0]">
              <ArrowUp size={9} strokeWidth={4} color="#909090" />
            </button>
            <button type="button" aria-label="下移" className="border border-black bg-[#c8c8c8]">
              <ArrowDown size={9} strokeWidth={4} />
            </button>
          </div>
        </div>
        <ProjectPanel />
        <div className="flex w-[7px] shrink-0 flex-col items-center pt-[264px]">
          <span className="h-[100px] w-[5px] border border-[#808080] bg-[#f4f4f4]" />
        </div>
        <div className="flex min-w-0 flex-1 flex-col">
          <div className="font-['Open_Sans','Noto_Sans_CJK_SC',sans-serif]">
            <EditToolbar />
          </div>
          <BillGrid />
          <Detail />
        </div>
      </main>
      <div className="flex h-5 shrink-0 gap-0.5 whitespace-nowrap">
        <p className="w-[357px] border border-[#dcdcdc] bg-linear-to-b from-white to-[#f0f0f0] pl-px leading-[18px]">清单库: 工程量清单项目计量规范(2013-湖北)</p>
        <p className="flex flex-1 justify-between border border-[#dcdcdc] bg-linear-to-b from-white to-[#f0f0f0] pr-1 pl-px leading-[18px]">
          <span>定额库: 湖北省房屋建筑与装饰工程消耗量定额</span>
          <span>计税方式(一般计税方法）</span>
        </p>
      </div>
      <Taskbar />
      <span className="absolute top-[165px] left-[347px] z-10 h-9 w-[220px] border-3 border-[#ff0000]" />
      <QueryDialog />
      <InputBar />
      <SpeedBall />
    </div>
  );
}
